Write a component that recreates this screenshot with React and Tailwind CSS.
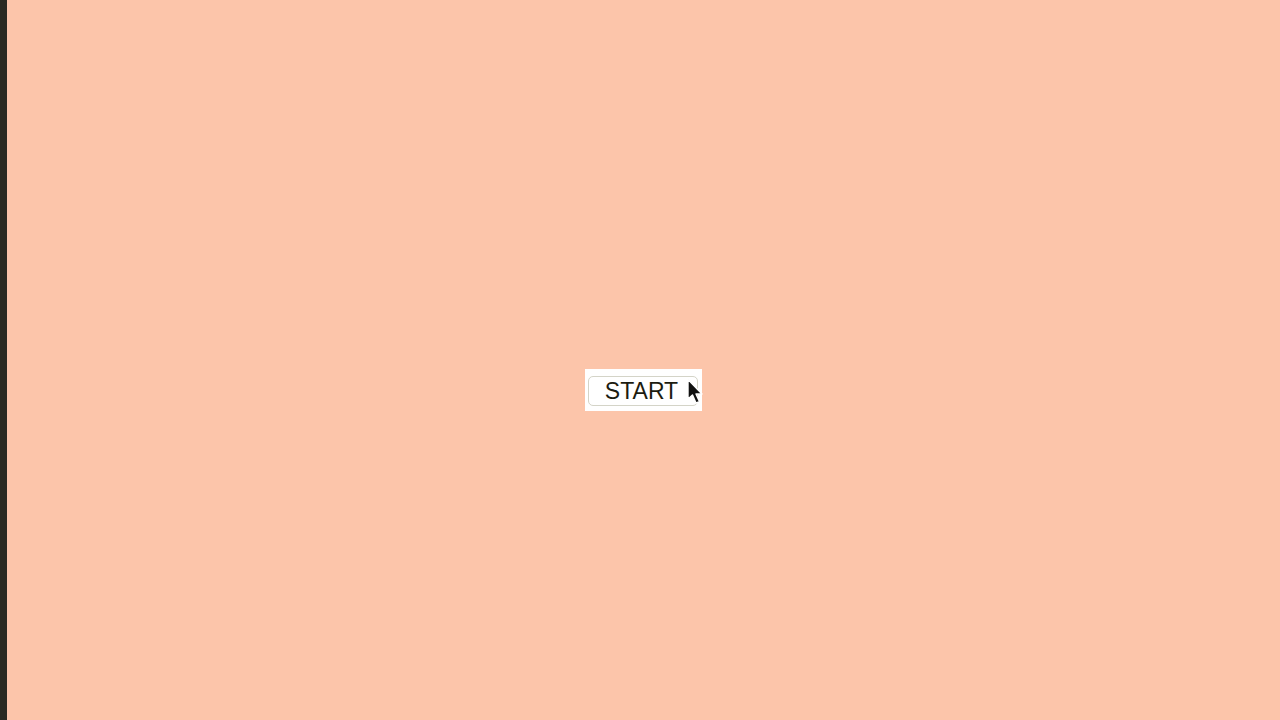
export default function App() {
  return (
    <div className="flex h-[720px] w-[1280px] overflow-hidden bg-[#fcc5aa]">
      <div className="w-[7px] shrink-0 bg-[#2a2a22]" />
      <div className="flex flex-1 items-center justify-center pt-[60px]">
        <div className="relative bg-white pb-[5px] pl-[3px] pr-[4px] pt-[7px]">
          <button
            type="button"
            className="flex h-[30px] w-[110px] items-center justify-center rounded-[5px] border border-[#d4d4c8] bg-white pr-[3px] text-[23px] text-[#1c1c10] [font-family:'Liberation_Sans',Arial,sans-serif]"
          >
            START
          </button>
          <svg
            className="absolute left-[101px] top-[9px]"
            width="18"
            height="28"
            viewBox="0 0 18 28"
          >
            <path
              d="M2 1.5 L2 21 L6.5 17 L10 25 L13.5 23.6 L10 16 L16 16 Z"
              fill="#111"
              stroke="#fff"
              strokeWidth="1.4"
              strokeLinejoin="round"
            />
          </svg>
        </div>
      </div>
    </div>
  );
}
